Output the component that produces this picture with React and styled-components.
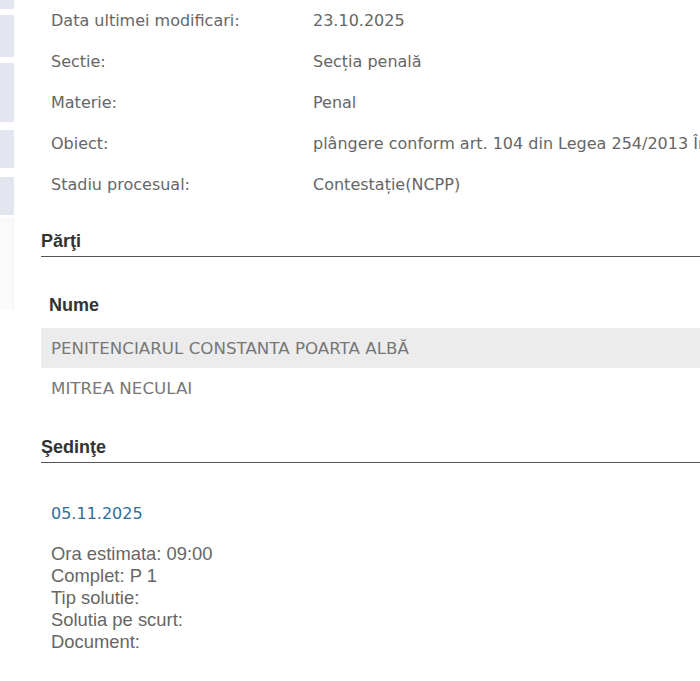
import React from "react";
import styled, { createGlobalStyle } from "styled-components";

const Global = createGlobalStyle`
  html, body { margin: 0; padding: 0; background: #fff; }
  body { width: 700px; height: 681px; overflow: hidden; }
`;

const Page = styled.div`
  display: flex;
  width: 700px;
  min-height: 681px;
  background: #fff;
`;

const Sidebar = styled.aside`
  width: 14px;
  flex-shrink: 0;
  display: flex;
  flex-direction: column;
`;

const SideBlock = styled.div`
  height: ${(p) => p.$h}px;
  margin-top: ${(p) => p.$gap || 0}px;
  background: ${(p) => (p.$faint ? "#fafafb" : "#e3e6ef")};
  border-right: ${(p) => (p.$faint ? "1px solid #f1f1f3" : "none")};
`;

const Main = styled.main`
  flex: 1;
  min-width: 0;
  padding-left: 27px;
  overflow: hidden;
`;

const Details = styled.dl`
  display: grid;
  grid-template-columns: 272px 1fr;
  margin: 0;
  font-family: "DejaVu Sans", Verdana, sans-serif;
  font-size: 16px;
  color: #666;
`;

const Label = styled.dt`
  height: 41px;
  line-height: 41px;
  padding-left: 10px;
  white-space: nowrap;
`;

const Value = styled.dd`
  margin: 0;
  height: 41px;
  line-height: 41px;
  white-space: nowrap;
`;

const SectionTitle = styled.h3`
  margin: ${(p) => p.$top}px 0 0;
  padding-bottom: 4px;
  border-bottom: 1px solid #555;
  font-family: "Liberation Sans", Arial, sans-serif;
  font-weight: bold;
  font-size: 18px;
  line-height: 22px;
  color: #333;
`;

const Table = styled.table`
  width: 100%;
  margin-top: 28px;
  border-collapse: collapse;
`;

const HeadCell = styled.th`
  height: 41px;
  padding: 0 0 2px 8px;
  text-align: left;
  font-family: "Liberation Sans", Arial, sans-serif;
  font-weight: bold;
  font-size: 18px;
  color: #333;
`;

const Row = styled.tr`
  background: ${(p) => (p.$shade ? "#ececec" : "transparent")};
`;

const Cell = styled.td`
  height: 40px;
  padding: 0 0 0 10px;
  font-family: "DejaVu Sans", Verdana, sans-serif;
  font-size: 16.7px;
  color: #777;
  white-space: nowrap;
`;

const HearingDate = styled.div`
  margin-top: 41px;
  padding-left: 10px;
  font-family: "DejaVu Sans", Verdana, sans-serif;
  font-size: 16px;
  line-height: 20px;
  color: #2e6f9b;
`;

const InfoList = styled.div`
  margin-top: 19px;
  padding-left: 10px;
  font-family: "Liberation Sans", Arial, sans-serif;
  font-size: 18.4px;
  line-height: 22px;
  color: #666;
`;

const InfoLine = styled.div`
  white-space: nowrap;
`;

const details = [
  ["Data ultimei modificari:", "23.10.2025"],
  ["Sectie:", "Secția penală"],
  ["Materie:", "Penal"],
  ["Obiect:", "plângere conform art. 104 din Legea 254/2013 Împotriva încheierii judecătorului de supraveghere"],
  ["Stadiu procesual:", "Contestație(NCPP)"],
];

const parties = ["PENITENCIARUL CONSTANTA POARTA ALBĂ", "MITREA NECULAI"];

const info = [
  "Ora estimata: 09:00",
  "Complet: P 1",
  "Tip solutie:",
  "Solutia pe scurt:",
  "Document:",
];

const sideBlocks = [
  { h: 9, gap: 0 },
  { h: 42, gap: 6 },
  { h: 59, gap: 6 },
  { h: 38, gap: 8 },
  { h: 38, gap: 9 },
  { h: 93, gap: 2, faint: true },
];

export default function App() {
  return (
    <>
      <Global />
      <Page>
        <Sidebar>
          {sideBlocks.map((b, i) => (
            <SideBlock key={i} $h={b.h} $gap={b.gap} $faint={b.faint} />
          ))}
        </Sidebar>
        <Main>
          <Details>
            {details.map(([l, v]) => (
              <React.Fragment key={l}>
                <Label>{l}</Label>
                <Value>{v}</Value>
              </React.Fragment>
            ))}
          </Details>

          <SectionTitle $top={25}>Părţi</SectionTitle>
          <Table>
            <thead>
              <tr>
                <HeadCell>Nume</HeadCell>
              </tr>
            </thead>
            <tbody>
              {parties.map((p, i) => (
                <Row key={p} $shade={i === 0}>
                  <Cell>{p}</Cell>
                </Row>
              ))}
            </tbody>
          </Table>

          <SectionTitle $top={28}>Şedinţe</SectionTitle>
          <HearingDate>05.11.2025</HearingDate>
          <InfoList>
            {info.map((t) => (
              <InfoLine key={t}>{t}</InfoLine>
            ))}
          </InfoList>
        </Main>
      </Page>
    </>
  );
}
